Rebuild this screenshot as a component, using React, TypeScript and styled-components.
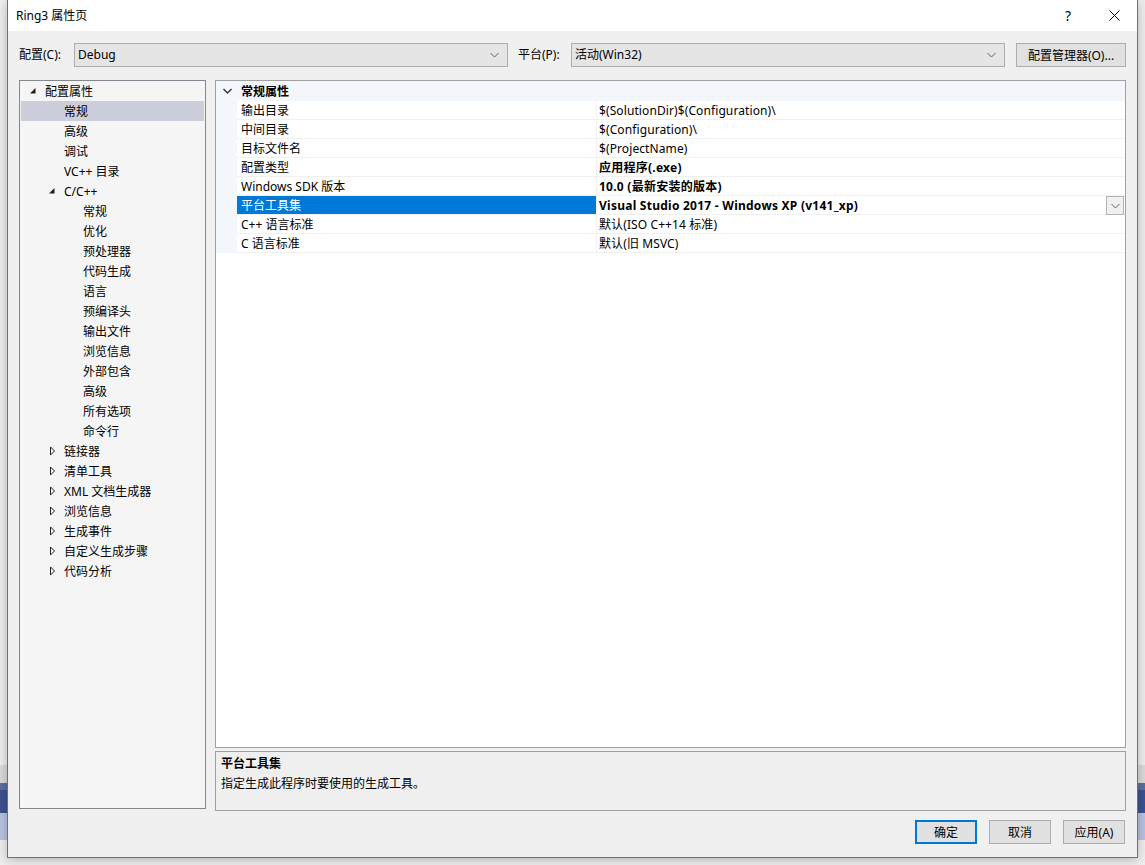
import React from "react";
import styled, { createGlobalStyle, css } from "styled-components";

const GlobalStyle = createGlobalStyle`
  html, body {
    margin: 0;
    padding: 0;
  }
  body {
    width: 1145px;
    height: 865px;
    overflow: hidden;
    font-family: "Noto Sans", "Noto Sans CJK SC", sans-serif;
    font-size: 12px;
    color: #000;
    background: linear-gradient(
      to bottom,
      #eeeeee 0,
      #eeeeee 765px,
      #dadada 765px,
      #dadada 783px,
      #5d6f9b 783px,
      #5d6f9b 790px,
      #3b5390 790px,
      #3b5390 813px,
      #b8c3e1 813px,
      #b8c3e1 840px,
      #efefef 840px
    );
  }
`;

const Desktop = styled.div`
  height: 865px;
  padding-left: 7px;
  display: flex;
`;

const Window = styled.div`
  width: 1131px;
  height: 858px;
  box-sizing: border-box;
  border: 1px solid #707070;
  border-top: none;
  background: #f0f0f0;
  display: flex;
  flex-direction: column;
  box-shadow: 0 2px 10px rgba(0, 0, 0, 0.25);
`;

const TitleBar = styled.div`
  height: 31px;
  flex-shrink: 0;
  background: #ffffff;
  display: flex;
  align-items: center;
  padding-left: 8px;
`;

const Title = styled.div`
  flex: 1;
  line-height: 31px;
  color: #000;
`;

const CaptionButton = styled.div`
  width: 46px;
  height: 31px;
  display: flex;
  align-items: center;
  justify-content: center;
  font-size: 14px;
  color: #000;
`;

const Body = styled.div`
  flex: 1;
  display: flex;
  flex-direction: column;
  padding: 12px 11px 0 11px;
`;

const TopRow = styled.div`
  height: 24px;
  display: flex;
  align-items: center;
`;

const FieldLabel = styled.div<{ w: number }>`
  width: ${(p) => p.w}px;
  line-height: 24px;
  flex-shrink: 0;
`;

const Combo = styled.div`
  width: 434px;
  height: 24px;
  box-sizing: border-box;
  border: 1px solid #adadad;
  background: #e5e5e5;
  display: flex;
  align-items: center;
  padding: 0 8px 0 3px;
  margin-right: 10px;
  flex-shrink: 0;
`;

const ComboText = styled.div`
  flex: 1;
  line-height: 22px;
`;

const Button = styled.div<{ $default?: boolean; w: number }>`
  width: ${(p) => p.w}px;
  height: 24px;
  box-sizing: border-box;
  border: 1px solid #adadad;
  background: #e1e1e1;
  display: flex;
  align-items: center;
  justify-content: center;
  flex-shrink: 0;
  ${(p) =>
    p.$default &&
    css`
      border: 2px solid #0078d7;
    `}
`;

const ManagerButton = styled(Button)`
  margin-left: 1px;
`;

const Main = styled.div`
  margin-top: 13px;
  height: 731px;
  display: flex;
  gap: 9px;
`;

const Tree = styled.div`
  width: 187px;
  height: 729px;
  box-sizing: border-box;
  border: 1px solid #828790;
  background: #f5f5f5;
  padding: 0 1px;
  flex-shrink: 0;
`;

const TreeRow = styled.div<{ level: number; selected?: boolean }>`
  height: 20px;
  display: flex;
  align-items: center;
  padding-left: ${(p) => 8 + p.level * 19}px;
  background: ${(p) => (p.selected ? "#cccedb" : "transparent")};
  white-space: nowrap;
`;

const Expander = styled.div`
  width: 16px;
  height: 20px;
  display: flex;
  align-items: center;
  flex-shrink: 0;
`;

const RightCol = styled.div`
  flex: 1;
  display: flex;
  flex-direction: column;
  gap: 3px;
`;

const Grid = styled.div`
  height: 668px;
  box-sizing: border-box;
  border: 1px solid #a0a0a0;
  background: #ffffff;
`;

const CategoryRow = styled.div`
  height: 20px;
  display: flex;
  align-items: center;
  background: #f3f6fb;
`;

const CategoryToggle = styled.div`
  width: 21px;
  display: flex;
  justify-content: center;
  padding-left: 1px;
  box-sizing: border-box;
`;

const CategoryName = styled.div`
  font-weight: bold;
  padding-left: 4px;
  line-height: 20px;
  padding-top: 1px;
`;

const PropRow = styled.div`
  height: 19px;
  display: flex;
`;

const Gutter = styled.div`
  width: 21px;
  background: #f3f6fb;
  flex-shrink: 0;
`;

const NameCell = styled.div<{ selected?: boolean }>`
  width: 359px;
  height: 19px;
  box-sizing: border-box;
  padding: 1px 0 0 4px;
  line-height: 17px;
  border-bottom: 1px solid #f0f0f0;
  flex-shrink: 0;
  white-space: nowrap;
  background: ${(p) => (p.selected ? "#0078d7" : "#ffffff")};
  color: ${(p) => (p.selected ? "#ffffff" : "#000000")};
`;

const ValueCell = styled.div<{ bold?: boolean }>`
  flex: 1;
  height: 19px;
  display: flex;
  align-items: flex-start;
  box-sizing: border-box;
  border-left: 1px solid #f0f0f0;
  border-bottom: 1px solid #f0f0f0;
  padding-left: 2px;
  font-weight: ${(p) => (p.bold ? "bold" : "normal")};
  letter-spacing: ${(p) => (p.bold ? "0.25px" : "0.1px")};
`;

const ValueText = styled.div`
  flex: 1;
  padding-top: 1px;
  line-height: 17px;
  white-space: nowrap;
`;

const DropButton = styled.div`
  width: 18px;
  height: 19px;
  box-sizing: border-box;
  border: 1px solid #b4b4b4;
  background: #f0f0f0;
  display: flex;
  align-items: center;
  justify-content: center;
  margin: 0 1px 0 0;
  flex-shrink: 0;
`;

const Description = styled.div`
  height: 60px;
  box-sizing: border-box;
  border: 1px solid #a0a0a0;
  background: #efefef;
  padding: 2px 5px;
`;

const DescTitle = styled.div`
  font-weight: bold;
  line-height: 20px;
`;

const DescText = styled.div`
  line-height: 19px;
`;

const ButtonRow = styled.div`
  margin-top: 9px;
  display: flex;
  justify-content: flex-end;
  gap: 12px;
  padding-right: 1px;
`;

const Chevron = ({ color = "#606060", weight = 1 }: { color?: string; weight?: number }) => (
  <svg width="9" height="6" viewBox="0 0 9 6">
    <path d="M0.5 1 L4.5 5 L8.5 1" fill="none" stroke={color} strokeWidth={weight} />
  </svg>
);

const ExpandedIcon = () => (
  <svg width="16" height="8" viewBox="0 0 16 8">
    <path d="M6.5 1 L6.5 6.5 L1 6.5 Z" fill="#1e1e1e" />
  </svg>
);

const CollapsedIcon = () => (
  <svg width="16" height="10" viewBox="0 0 16 10">
    <path d="M2.5 1 L6.5 5 L2.5 9 Z" fill="none" stroke="#1e1e1e" strokeWidth="1" />
  </svg>
);

type TreeItem = { label: string; level: number; state?: "open" | "closed"; selected?: boolean };

const treeItems: TreeItem[] = [
  { label: "配置属性", level: 0, state: "open" },
  { label: "常规", level: 1, selected: true },
  { label: "高级", level: 1 },
  { label: "调试", level: 1 },
  { label: "VC++ 目录", level: 1 },
  { label: "C/C++", level: 1, state: "open" },
  { label: "常规", level: 2 },
  { label: "优化", level: 2 },
  { label: "预处理器", level: 2 },
  { label: "代码生成", level: 2 },
  { label: "语言", level: 2 },
  { label: "预编译头", level: 2 },
  { label: "输出文件", level: 2 },
  { label: "浏览信息", level: 2 },
  { label: "外部包含", level: 2 },
  { label: "高级", level: 2 },
  { label: "所有选项", level: 2 },
  { label: "命令行", level: 2 },
  { label: "链接器", level: 1, state: "closed" },
  { label: "清单工具", level: 1, state: "closed" },
  { label: "XML 文档生成器", level: 1, state: "closed" },
  { label: "浏览信息", level: 1, state: "closed" },
  { label: "生成事件", level: 1, state: "closed" },
  { label: "自定义生成步骤", level: 1, state: "closed" },
  { label: "代码分析", level: 1, state: "closed" },
];

type Prop = { name: string; value: string; bold?: boolean; selected?: boolean };

const props: Prop[] = [
  { name: "输出目录", value: "$(SolutionDir)$(Configuration)\\" },
  { name: "中间目录", value: "$(Configuration)\\" },
  { name: "目标文件名", value: "$(ProjectName)" },
  { name: "配置类型", value: "应用程序(.exe)", bold: true },
  { name: "Windows SDK 版本", value: "10.0 (最新安装的版本)", bold: true },
  { name: "平台工具集", value: "Visual Studio 2017 - Windows XP (v141_xp)", bold: true, selected: true },
  { name: "C++ 语言标准", value: "默认(ISO C++14 标准)" },
  { name: "C 语言标准", value: "默认(旧 MSVC)" },
];

export default function App() {
  return (
    <>
      <GlobalStyle />
      <Desktop>
        <Window>
          <TitleBar>
            <Title>Ring3 属性页</Title>
            <CaptionButton>?</CaptionButton>
            <CaptionButton>
              <svg width="11" height="11" viewBox="0 0 11 11">
                <path d="M0.5 0.5 L10.5 10.5 M10.5 0.5 L0.5 10.5" stroke="#000" strokeWidth="1" />
              </svg>
            </CaptionButton>
          </TitleBar>
          <Body>
            <TopRow>
              <FieldLabel w={55}>配置(C):</FieldLabel>
              <Combo>
                <ComboText>Debug</ComboText>
                <Chevron />
              </Combo>
              <FieldLabel w={53}>平台(P):</FieldLabel>
              <Combo>
                <ComboText>活动(Win32)</ComboText>
                <Chevron />
              </Combo>
              <ManagerButton w={110}>配置管理器(O)...</ManagerButton>
            </TopRow>
            <Main>
              <Tree>
                {treeItems.map((t, i) => (
                  <TreeRow key={i} level={t.level} selected={t.selected}>
                    <Expander>
                      {t.state === "open" && <ExpandedIcon />}
                      {t.state === "closed" && <CollapsedIcon />}
                    </Expander>
                    {t.label}
                  </TreeRow>
                ))}
              </Tree>
              <RightCol>
                <Grid>
                  <CategoryRow>
                    <CategoryToggle>
                      <Chevron color="#333333" weight={1.4} />
                    </CategoryToggle>
                    <CategoryName>常规属性</CategoryName>
                  </CategoryRow>
                  {props.map((p) => (
                    <PropRow key={p.name}>
                      <Gutter />
                      <NameCell selected={p.selected}>{p.name}</NameCell>
                      <ValueCell bold={p.bold}>
                        <ValueText>{p.value}</ValueText>
                        {p.selected && (
                          <DropButton>
                            <Chevron />
                          </DropButton>
                        )}
                      </ValueCell>
                    </PropRow>
                  ))}
                </Grid>
                <Description>
                  <DescTitle>平台工具集</DescTitle>
                  <DescText>指定生成此程序时要使用的生成工具。</DescText>
                </Description>
              </RightCol>
            </Main>
            <ButtonRow>
              <Button w={62} $default>
                确定
              </Button>
              <Button w={62}>取消</Button>
              <Button w={62}>应用(A)</Button>
            </ButtonRow>
          </Body>
        </Window>
      </Desktop>
    </>
  );
}
